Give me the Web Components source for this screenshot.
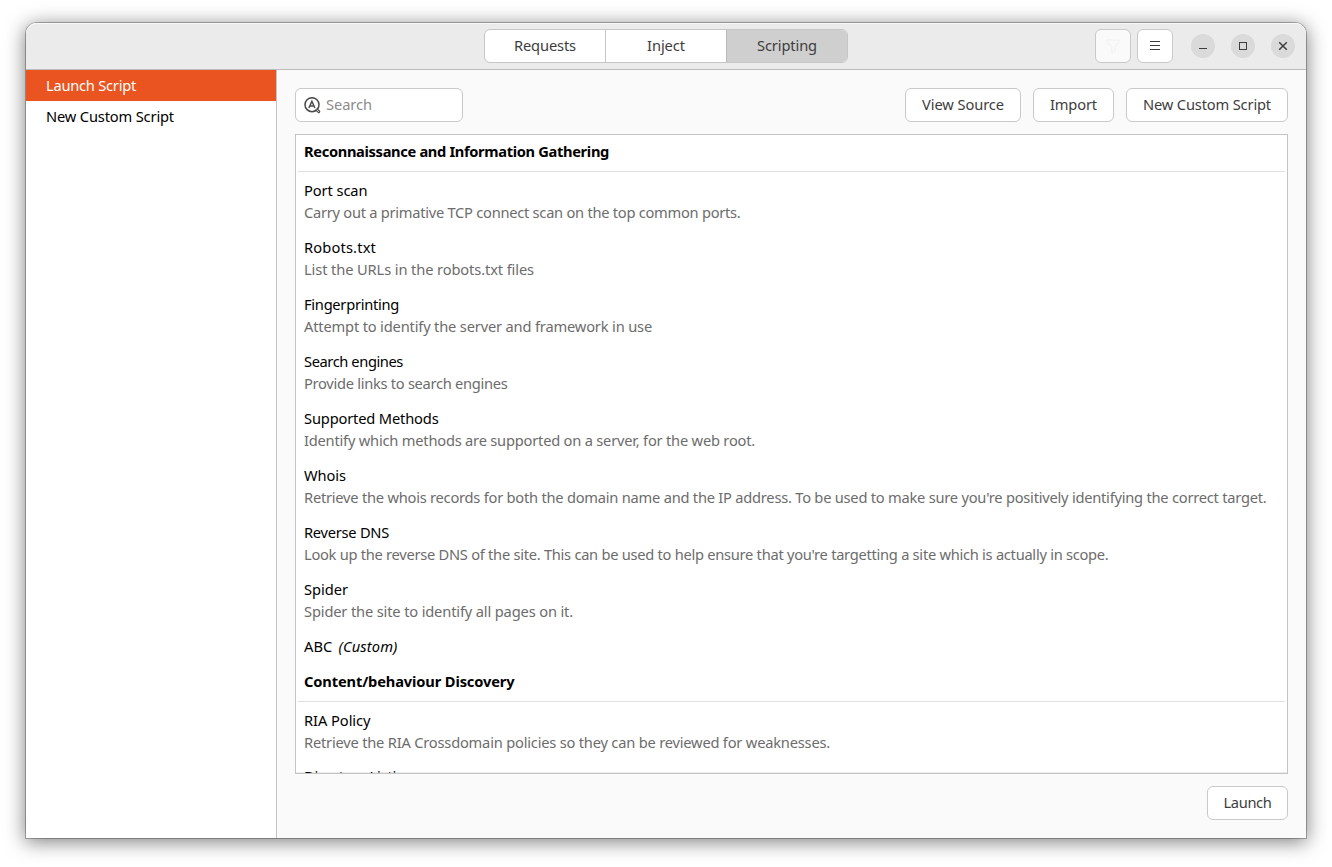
<!DOCTYPE html>
<html lang="en">
<head>
<meta charset="utf-8">
<title>Scripting</title>
<style>
html, body { margin: 0; height: 100%; overflow: hidden; background: #fff; }
body { font: 14.67px/22px "Noto Sans", "Open Sans", sans-serif; color: #000; }
</style>
</head>
<body>
<app-window></app-window>
<script>
const define = (name, html, setup) => {
  const t = document.createElement('template');
  t.innerHTML = html;
  customElements.define(name, class extends HTMLElement {
    connectedCallback() {
      if (this.shadowRoot) return;
      this.attachShadow({ mode: 'open' }).append(t.content.cloneNode(true));
      if (setup) setup(this, this.shadowRoot);
    }
  });
};

/* Text run tracked so that it occupies the width given in "w". */
define('fit-text', `<style>
:host { display: inline-block; white-space: pre; }
span { display: inline-block; }
</style><span><slot></slot></span>`, (el, root) => {
  const span = root.querySelector('span');
  const w = parseFloat(el.getAttribute('w'));
  const delta = w - span.getBoundingClientRect().width;
  span.style.letterSpacing = (delta / el.textContent.length) + 'px';
  el.style.width = w + 'px';
});

define('push-button', `<style>
:host { display: flex; align-items: center; justify-content: center; box-sizing: border-box; height: 34px; padding: 0 0 2px; background: #fff; border: 1px solid #c9c9c9; border-radius: 6px; color: #3d3d3d; }
:host([dim]) { background: #fafafa; }
</style><slot></slot>`);

define('view-switcher', `<style>
:host { display: flex; box-sizing: border-box; width: 364px; height: 34px; border: 1px solid #c6c6c6; border-radius: 6px; overflow: hidden; background: #fff; color: #3d3d3d; }
::slotted(*) { flex: 1; display: flex; justify-content: center; align-items: center; padding-bottom: 2px; border-left: 1px solid #c6c6c6; }
::slotted(:first-child) { border-left: 0; }
::slotted([active]) { background: #cfcfcf; border-left-color: #b9b9b9; }
</style><slot></slot>`);

define('window-button', `<style>
:host { display: block; width: 24px; height: 24px; border-radius: 50%; background: #dadada; }
svg { display: block; }
</style><svg width="24" height="24" fill="none" stroke="#3d3d3d"></svg>`, (el, root) => {
  root.querySelector('svg').innerHTML = {
    min: '<path d="M8 14.5h8"/>',
    max: '<rect x="8.5" y="8.5" width="7" height="7"/>',
    close: '<path stroke-width="1.5" d="M8.2 8.2l7.6 7.6M15.8 8.2l-7.6 7.6"/>'
  }[el.getAttribute('kind')];
});

define('title-bar', `<style>
:host { display: grid; grid-template-columns: 1fr 364px 1fr; align-items: start; box-sizing: border-box; height: 47px; padding-top: 6px; background: #ebebeb; border-bottom: 1px solid #bdbdbd; box-shadow: inset 0 1px #f9f9f9; }
view-switcher { grid-column: 2; }
.end { display: flex; justify-content: flex-end; align-items: center; padding-right: 11px; }
push-button { width: 36px; padding-bottom: 1px; }
push-button + push-button { margin: 0 18px 0 6px; }
window-button + window-button { margin-left: 16px; }
svg { display: block; }
</style>
<view-switcher>
<div><fit-text w="62">Requests</fit-text></div>
<div><fit-text w="38">Inject</fit-text></div>
<div active><fit-text w="60">Scripting</fit-text></div>
</view-switcher>
<div class="end">
<push-button dim><svg width="16" height="16" fill="none" stroke="#f5f5f5" stroke-width="2" stroke-linejoin="round"><path d="M2 2h12v2L10 9v4l-3 2V9L2 4z"/></svg></push-button>
<push-button><svg width="16" height="16" stroke="#3d3d3d"><path d="M3 3.5h10M3 7.5h10M3 11.5h10"/></svg></push-button>
<window-button kind="min"></window-button>
<window-button kind="max"></window-button>
<window-button kind="close"></window-button>
</div>`);

define('side-item', `<style>
:host { display: block; height: 31px; line-height: 31px; padding-left: 20px; }
:host([selected]) { background: #e95420; color: #fff; }
</style><slot></slot>`);

define('side-bar', `<style>
:host { display: block; width: 250px; background: #fff; border-right: 1px solid #c4c4c4; }
</style>
<side-item selected><fit-text w="90">Launch Script</fit-text></side-item>
<side-item><fit-text w="128">New Custom Script</fit-text></side-item>`);

define('search-field', `<style>
:host { display: flex; align-items: center; gap: 5px; box-sizing: border-box; width: 168px; height: 34px; padding: 0 8px 2px; background: #fff; border: 1px solid #c9c9c9; border-radius: 6px; color: #8b8b8b; }
svg { display: block; margin-top: 2px; }
</style>
<svg width="17" height="17" fill="none" stroke="#4a4a4a"><circle cx="8" cy="7.7" r="7" stroke-width="1.5"/><path stroke-width="3" stroke-linecap="round" d="M13 13l1.8 1.7"/><path stroke="#ddd" stroke-linecap="round" d="M13 13l1.8 1.7"/><path stroke-width="1.5" d="M4.9 11L7.9 4.3L10.9 11M6 9h4"/></svg>
<fit-text w="46">Search</fit-text>`);

define('script-heading', `<style>
:host { display: block; box-sizing: border-box; height: 37px; margin: 0 2px 2px; padding: 5px 6px 0; border-bottom: 1px solid #e0e0e0; font-weight: bold; }
</style><slot></slot>`);

define('script-row', `<style>
:host { display: block; padding: 5px 8px 8px; }
.name, .about { display: block; height: 22px; white-space: nowrap; }
.about { color: #6c6c6c; }
:host([single]) .about { display: none; }
</style><div class="name"><slot></slot></div><div class="about"><slot name="about"></slot></div>`);

const sections = [
  ['Reconnaissance and Information Gathering', 305, [
    ['Port scan', 63.5, 'Carry out a primative TCP connect scan on the top common ports.', 436.5],
    ['Robots.txt', 72, 'List the URLs in the robots.txt files', 230],
    ['Fingerprinting', 95, 'Attempt to identify the server and framework in use', 348],
    ['Search engines', 99, 'Provide links to search engines', 203.5],
    ['Supported Methods', 134.5, 'Identify which methods are supported on a server, for the web root.', 451],
    ['Whois', 42, "Retrieve the whois records for both the domain name and the IP address. To be used to make sure you're positively identifying the correct target.", 962.5],
    ['Reverse DNS', 85, "Look up the reverse DNS of the site. This can be used to help ensure that you're targetting a site which is actually in scope.", 804.5],
    ['Spider', 44, 'Spider the site to identify all pages on it.', 269],
    ['ABC', 28.5]
  ]],
  ['Content/behaviour Discovery', 210.5, [
    ['RIA Policy', 66.5, 'Retrieve the RIA Crossdomain policies so they can be reviewed for weaknesses.', 526],
    ['Directory Listing', 110]
  ]]
];

define('script-list', `<style>
:host { display: block; box-sizing: border-box; height: 640px; overflow: hidden; background: #fff; border: 1px solid #c4c4c4; box-shadow: inset 0 -1px #ececec; }
i { margin-left: 6px; }
script-row:last-child { margin-top: -1px; }
</style>`, (el, root) => {
  const fit = (text, w) => `<fit-text w="${w}">${text}</fit-text>`;
  const html = sections.map(([title, w, rows]) =>
    `<script-heading>${fit(title, w)}</script-heading>` + rows.map(([n, nw, a, aw]) =>
      `<script-row${a ? '' : ' single'}>${fit(n, nw)}${n === 'ABC' ? '<i>' + fit('(Custom)', 59) + '</i>' : ''}${a ? `<span slot="about">${fit(a, aw)}</span>` : ''}</script-row>`
    ).join('')).join('');
  root.append(document.createRange().createContextualFragment(html));
});

define('script-page', `<style>
:host { display: flex; flex-direction: column; flex: 1; min-width: 0; padding: 18px; gap: 12px; box-sizing: border-box; background: #fafafa; }
.bar { display: flex; gap: 12px; }
.grow { flex: 1; }
</style>
<div class="bar"><search-field></search-field><div class="grow"></div>
<push-button style="width:116px"><fit-text w="82">View Source</fit-text></push-button>
<push-button style="width:81px"><fit-text w="47">Import</fit-text></push-button>
<push-button style="width:162px"><fit-text w="128">New Custom Script</fit-text></push-button></div>
<script-list></script-list>
<div class="bar"><div class="grow"></div><push-button style="width:81px"><fit-text w="48">Launch</fit-text></push-button></div>`);

define('app-window', `<style>
:host { display: flex; flex-direction: column; width: 1280px; height: 815px; margin: 23px 0 0 26px; border-radius: 11px 11px 0 0; box-shadow: 0 0 0 1px rgba(0,0,0,.27), 0 3px 19px 1px rgba(0,0,0,.5); }
title-bar { border-radius: 11px 11px 0 0; }
.body { flex: 1; display: flex; min-height: 0; }
</style>
<title-bar></title-bar>
<div class="body"><side-bar></side-bar><script-page></script-page></div>`);
</script>
</body>
</html>
